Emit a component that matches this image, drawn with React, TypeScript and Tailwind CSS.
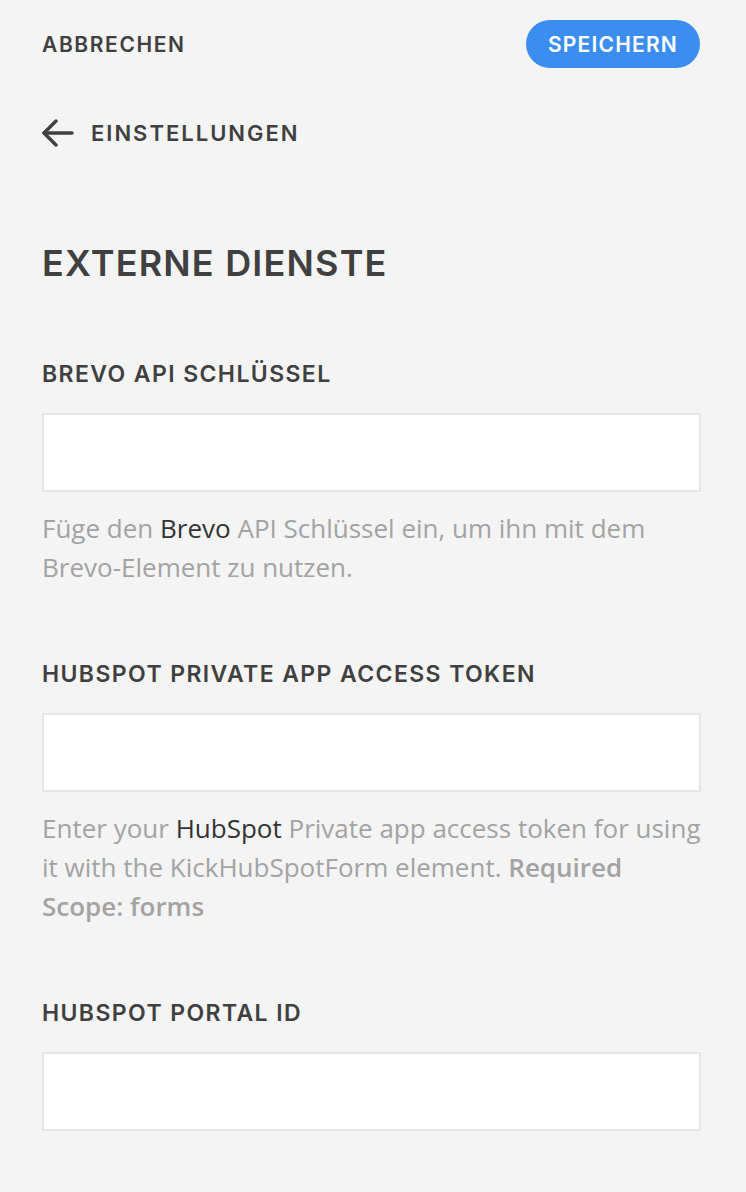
import React from 'react';

const heading = { fontFamily: 'Inter, "Noto Sans", sans-serif' };
const body = { fontFamily: '"Open Sans", "Noto Sans", sans-serif' };

interface FieldProps {
  label: string;
  children?: React.ReactNode;
}

function Field({ label, children }: FieldProps) {
  return (
    <div className="flex flex-col">
      <label className="text-[23px] font-semibold uppercase leading-[21px] tracking-[1.4px] text-[#404040]" style={heading}>
        {label}
      </label>
      <input
        type="text"
        className="mt-[28px] mr-[3px] h-[79px] border-2 border-[#e6e6e6] bg-white outline-none"
      />
      {children && (
        <p className="mt-[17px] text-[26px] leading-[39px] text-[#a3a3a3]" style={body}>
          {children}
        </p>
      )}
    </div>
  );
}

export default function App() {
  return (
    <div className="min-h-[1192px] w-full bg-[#f4f4f4] px-[42px] pt-[20px]">
      {/* Top bar */}
      <div className="flex h-[48px] items-center justify-between">
        <button className="text-[21px] font-semibold uppercase leading-none tracking-[1.6px] text-[#404040]" style={heading}>
          Abbrechen
        </button>
        <button
          className="mr-[4px] h-[48px] rounded-full bg-[#3b8eef] px-[22px] text-[21px] font-semibold uppercase leading-none tracking-[1.2px] text-white"
          style={heading}
        >
          Speichern
        </button>
      </div>

      {/* Back link */}
      <div className="mt-[51px] flex h-[28px] items-center gap-[17px]">
        <svg width="32" height="28" viewBox="0 0 32 28" fill="none" stroke="#404040" strokeWidth="3.4" strokeLinecap="round" strokeLinejoin="round">
          <path d="M30 14H2" />
          <path d="M14 2L2 14l12 12" />
        </svg>
        <span className="text-[22px] font-semibold uppercase leading-none tracking-[2px] text-[#404040]" style={heading}>
          Einstellungen
        </span>
      </div>

      <h1 className="mt-[98px] text-[36px] font-semibold uppercase leading-[36px] tracking-[1.2px] text-[#404040]" style={heading}>
        Externe Dienste
      </h1>

      <div className="mt-[83px] flex flex-col gap-[77px] pb-[60px]">
        <Field label="Brevo API Schlüssel">
          Füge den <span className="text-[#333]">Brevo</span> API Schlüssel ein, um ihn mit dem Brevo-Element zu nutzen.
        </Field>
        <Field label="HubSpot Private App Access Token">
          Enter your <span className="text-[#333]">HubSpot</span> Private app access token for using it with the KickHubSpotForm element.{' '}
          <span className="font-semibold">Required Scope: forms</span>
        </Field>
        <Field label="HubSpot Portal ID" />
      </div>
    </div>
  );
}
